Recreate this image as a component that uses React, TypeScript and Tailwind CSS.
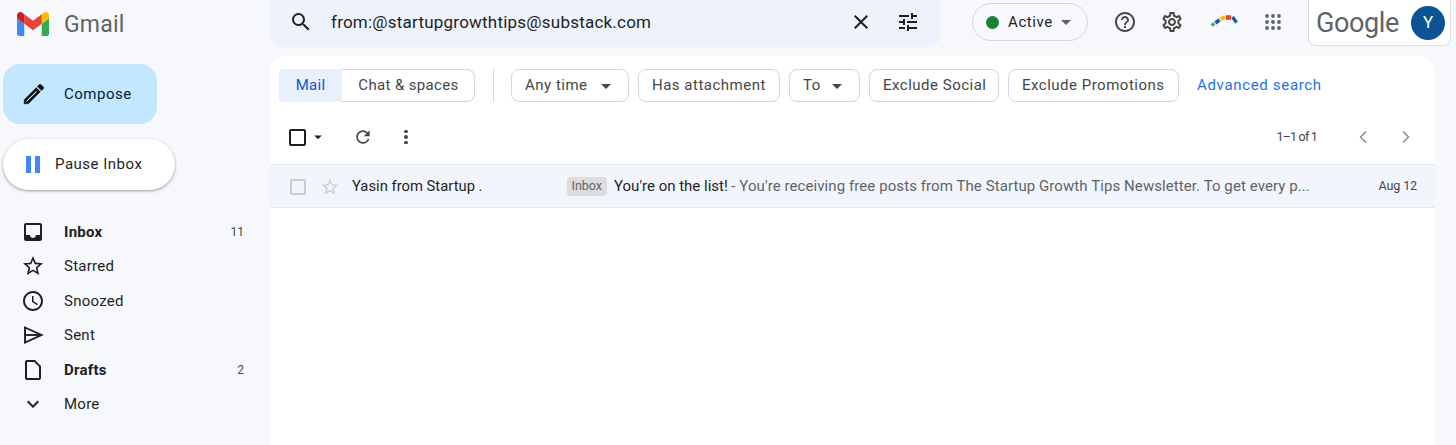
import React from "react";

const P = {
  search: "M15.5 14h-.79l-.28-.27A6.471 6.471 0 0 0 16 9.5 6.5 6.5 0 1 0 9.5 16c1.61 0 3.09-.59 4.23-1.57l.27.28v.79l5 4.99L20.49 19l-4.99-5zm-6 0C7.01 14 5 11.99 5 9.5S7.01 5 9.5 5 14 7.01 14 9.5 11.99 14 9.5 14z",
  close: "M19 6.41 17.59 5 12 10.59 6.41 5 5 6.41 10.59 12 5 17.59 6.41 19 12 13.41 17.59 19 19 17.59 13.41 12z",
  tune: "M3 17v2h6v-2H3zM3 5v2h10V5H3zm10 16v-2h8v-2h-8v-2h-2v6h2zM7 9v2H3v2h4v2h2V9H7zm14 4v-2H11v2h10zm-6-4h2V7h4V5h-4V3h-2v6z",
  help: "M11 18h2v-2h-2v2zm1-16C6.48 2 2 6.48 2 12s4.48 10 10 10 10-4.48 10-10S17.52 2 12 2zm0 18c-4.41 0-8-3.59-8-8s3.59-8 8-8 8 3.59 8 8-3.59 8-8 8zm0-14c-2.21 0-4 1.79-4 4h2c0-1.1.9-2 2-2s2 .9 2 2c0 2-3 1.75-3 5h2c0-2.25 3-2.5 3-5 0-2.21-1.79-4-4-4z",
  gear: "M19.43 12.98c.04-.32.07-.64.07-.98 0-.34-.03-.66-.07-.98l2.11-1.65c.19-.15.24-.42.12-.64l-2-3.46c-.09-.16-.26-.25-.44-.25-.06 0-.12.01-.17.03l-2.49 1c-.52-.4-1.08-.73-1.69-.98l-.38-2.65C14.46 2.18 14.25 2 14 2h-4c-.25 0-.46.18-.49.42l-.38 2.65c-.61.25-1.17.59-1.69.98l-2.49-1c-.06-.02-.12-.03-.18-.03-.17 0-.34.09-.43.25l-2 3.46c-.13.22-.07.49.12.64l2.11 1.65c-.04.32-.07.65-.07.98 0 .33.03.66.07.98l-2.11 1.65c-.19.15-.24.42-.12.64l2 3.46c.09.16.26.25.44.25.06 0 .12-.01.17-.03l2.49-1c.52.4 1.08.73 1.69.98l.38 2.65c.03.24.24.42.49.42h4c.25 0 .46-.18.49-.42l.38-2.65c.61-.25 1.17-.59 1.69-.98l2.49 1c.06.02.12.03.18.03.17 0 .34-.09.43-.25l2-3.46c.12-.22.07-.49-.12-.64l-2.11-1.65zm-1.98-1.71c.04.31.05.52.05.73 0 .21-.02.43-.05.73l-.14 1.13.89.7 1.08.84-.7 1.21-1.27-.51-1.04-.42-.9.68c-.43.32-.84.56-1.25.73l-1.06.43-.16 1.13-.2 1.35h-1.4l-.19-1.35-.16-1.13-1.06-.43c-.43-.18-.83-.41-1.23-.71l-.91-.7-1.06.43-1.27.51-.7-1.21 1.08-.84.89-.7-.14-1.13c-.03-.31-.05-.54-.05-.74s.02-.43.05-.73l.14-1.13-.89-.7-1.08-.84.7-1.21 1.27.51 1.04.42.9-.68c.43-.32.84-.56 1.25-.73l1.06-.43.16-1.13.2-1.35h1.39l.19 1.35.16 1.13 1.06.43c.43.18.83.41 1.23.71l.91.7 1.06-.43 1.27-.51.7 1.21-1.07.85-.89.7.14 1.13zM12 8c-2.21 0-4 1.79-4 4s1.79 4 4 4 4-1.79 4-4-1.79-4-4-4zm0 6c-1.1 0-2-.9-2-2s.9-2 2-2 2 .9 2 2-.9 2-2 2z",
  inbox: "M19 3H4.99c-1.11 0-1.98.89-1.98 2L3 19c0 1.1.88 2 1.99 2H19c1.1 0 2-.9 2-2V5c0-1.11-.9-2-2-2zm0 12h-4c0 1.66-1.35 3-3 3s-3-1.34-3-3H4.99V5H19v10z",
  star: "M22 9.24l-7.19-.62L12 2 9.19 8.63 2 9.24l5.46 4.73L5.82 21 12 17.27 18.18 21l-1.63-7.03L22 9.24zM12 15.4l-3.76 2.27 1-4.28-3.32-2.88 4.38-.38L12 6.1l1.71 4.04 4.38.38-3.32 2.88 1 4.28L12 15.4z",
  clock: "M11.99 2C6.47 2 2 6.48 2 12s4.47 10 9.99 10C17.52 22 22 17.52 22 12S17.52 2 11.99 2zM12 20c-4.42 0-8-3.58-8-8s3.58-8 8-8 8 3.58 8 8-3.58 8-8 8zm.5-13H11v6l5.25 3.15.75-1.23-4.5-2.67z",
  draft: "M14 2H6c-1.1 0-2 .9-2 2v16c0 1.1.9 2 2 2h12c1.1 0 2-.9 2-2V8l-6-6zm4 18H6V4h7.17L18 8.83V20z",
  down: "M16.59 8.59 12 13.17 7.41 8.59 6 10l6 6 6-6z",
  refresh: "M17.65 6.35A7.958 7.958 0 0 0 12 4c-4.42 0-7.99 3.58-7.99 8s3.57 8 7.99 8c3.73 0 6.84-2.55 7.73-6h-2.08A5.99 5.99 0 0 1 12 18c-3.31 0-6-2.69-6-6s2.69-6 6-6c1.66 0 3.14.69 4.22 1.78L13 11h7V4l-2.35 2.35z",
  edit: "M3 17.25V21h3.75L17.81 9.94l-3.75-3.75L3 17.25zM5.92 19H5v-.92l9.06-9.06.92.92L5.92 19zM20.71 5.63l-2.34-2.34c-.2-.2-.45-.29-.71-.29s-.51.1-.7.29l-1.83 1.83 3.75 3.75 1.83-1.83c.39-.39.39-1.02 0-1.41z",
  caret: "M7 10l5 5 5-5z",
};

function I({ d, size = 24, color = "#1f1f1f", sw = 0 }: { d: string; size?: number; color?: string; sw?: number }) {
  return (
    <svg width={size} height={size} viewBox="0 0 24 24" fill={color} stroke={sw ? color : "none"} strokeWidth={sw} className="shrink-0">
      <path d={d} />
    </svg>
  );
}

function SendIcon() {
  return (
    <svg width="24" height="24" viewBox="0 0 24 24" fill="none" stroke="#1f1f1f" strokeWidth="1.9" className="shrink-0">
      <path d="M4 4.5 20.5 12 4 19.5Z" />
      <path d="M4 12H20" />
    </svg>
  );
}

function GmailLogo() {
  return (
    <svg width="32" height="24" viewBox="52 42 88 66" className="shrink-0">
      <path fill="#4285f4" d="M58 108h14V74L52 59v43c0 3.32 2.69 6 6 6" />
      <path fill="#34a853" d="M120 108h14c3.32 0 6-2.69 6-6V59l-20 15" />
      <path fill="#fbbc04" d="M120 48v26l20-15v-8c0-7.42-8.47-11.65-14.4-7.2" />
      <path fill="#ea4335" d="M72 74V48l24 18 24-18v26L96 92" />
      <path fill="#c5221f" d="M52 51v8l20 15V48l-5.6-4.2c-5.94-4.45-14.4-.22-14.4 7.2" />
    </svg>
  );
}

function Rainbow() {
  const segs: [string, string, number][] = [
    ["#34a853", "M1.5 13.5 L4.5 11.5", 2.8],
    ["#1a56b0", "M5.5 11 L9.5 7.8", 3.6],
    ["#fbbc04", "M10.5 7.2 L15 5", 4],
    ["#ea4335", "M16 5.5 L21 5.5", 4.6],
    ["#0b5ca8", "M22.5 5 L26.5 10.5", 3.2],
  ];
  return (
    <svg width="28" height="16" viewBox="0 0 28 16" className="shrink-0">
      {segs.map(([c, d, w]) => (
        <path key={d} d={d} stroke={c} strokeWidth={w} fill="none" />
      ))}
    </svg>
  );
}

function Apps() {
  const xs = [3, 9, 15];
  return (
    <svg width="18" height="18" viewBox="0 0 18 18" fill="#5f6368" className="shrink-0">
      {xs.map((y) => xs.map((x) => <circle key={`${x}${y}`} cx={x} cy={y} r="1.9" />))}
    </svg>
  );
}

function Chip({ label, caret, cls }: { label: string; caret?: boolean; cls: string }) {
  return (
    <div className={`h-[33px] rounded-[8px] border border-[#d3d6da] flex items-center pl-[13px] text-[15px] text-[#444746] tracking-[0.5px] ${cls}`}>
      <span>{label}</span>
      {caret && <span className="ml-auto mr-[10px] flex"><I d={P.caret} size={24} color="#444746" /></span>}
    </div>
  );
}

function NavRow({ icon, label, bold, count }: { icon: React.ReactNode; label: string; bold?: boolean; count?: string }) {
  return (
    <div className="h-[34.5px] flex items-center pl-[21px] pr-[26px]">
      {icon}
      <span className={`ml-[19px] text-[15px] text-[#1f1f1f] tracking-[0.25px] ${bold ? "font-bold" : ""}`}>{label}</span>
      {count && <span className="ml-auto text-[12px] text-[#444746]">{count}</span>}
    </div>
  );
}

export default function App() {
  return (
    <div className="w-[1456px] h-[445px] overflow-hidden bg-[#f6f8fc] flex font-['Roboto',sans-serif]">
      <aside className="w-[270px] shrink-0 flex flex-col">
        <div className="h-[64px] flex items-start pl-[17px] pt-[12px]">
          <GmailLogo />
          <span className="ml-[15px] text-[23px] leading-[25px] text-[#5f6368] tracking-[0.2px]">Gmail</span>
        </div>
        <div className="ml-[3px] w-[154px] h-[60px] rounded-[17px] bg-[#c2e7ff] flex items-center pl-[18px]">
          <I d={P.edit} size={26} color="#0b0b0b" sw={0.5} />
          <span className="ml-[17px] pt-[1px] text-[15px] text-[#001d35] tracking-[0.5px]">Compose</span>
        </div>
        <div className="ml-[3px] mt-[15px] w-[172px] h-[51px] rounded-full bg-white shadow-[0_1px_3px_rgba(60,64,67,0.5)] flex items-center pl-[23px]">
          <span className="flex gap-[4px]">
            <span className="w-[5px] h-[17px] bg-[#4285f4]" />
            <span className="w-[5px] h-[17px] bg-[#4285f4]" />
          </span>
          <span className="ml-[15px] text-[15px] text-[#1f1f1f] tracking-[0.5px]">Pause Inbox</span>
        </div>
        <nav className="mt-[24.5px] flex flex-col">
          <NavRow icon={<I d={P.inbox} />} label="Inbox" bold count="11" />
          <NavRow icon={<I d={P.star} />} label="Starred" />
          <NavRow icon={<I d={P.clock} />} label="Snoozed" />
          <NavRow icon={<SendIcon />} label="Sent" />
          <NavRow icon={<I d={P.draft} />} label="Drafts" bold count="2" />
          <NavRow icon={<I d={P.down} />} label="More" />
        </nav>
      </aside>

      <div className="flex-1 min-w-0 flex flex-col">
        <header className="h-[56px] shrink-0 flex items-start">
          <div className="w-[670px] h-[47px] rounded-b-[12px] bg-[#edf2fc] flex items-center pl-[19px] pr-[20px] pb-[3px]">
            <I d={P.search} size={24} />
            <span className="ml-[18px] pt-[1px] text-[17px] text-[#1f1f1f] tracking-[0.22px]">from:@startupgrowthtips@substack.com</span>
            <span className="ml-auto flex"><I d={P.close} size={24} /></span>
            <span className="ml-[23px] flex"><I d={P.tune} size={24} /></span>
          </div>
          <div className="ml-[32px] mt-[3px] w-[116px] h-[38px] rounded-full border border-[#d3d6da] flex items-center pl-[13px]">
            <span className="w-[13px] h-[13px] rounded-full bg-[#188038]" />
            <span className="ml-[9px] text-[15px] text-[#1f1f1f] tracking-[0.6px]">Active</span>
            <span className="ml-[1px] flex"><I d={P.caret} size={24} color="#5f6368" /></span>
          </div>
          <span className="ml-[25px] mt-[10px] flex"><I d={P.help} size={24} color="#444746" /></span>
          <span className="ml-[23px] mt-[10px] flex"><I d={P.gear} size={24} color="#444746" /></span>
          <span className="ml-[26px] mt-[12px] flex"><Rainbow /></span>
          <span className="ml-[26px] mt-[13px] flex"><Apps /></span>
          <div className="ml-[26px] w-[143px] h-[46px] rounded-b-[8px] border border-t-0 border-[#dadce0] bg-white flex items-center pl-[7px]">
            <span className="text-[27px] text-[#5f6368] leading-[44px] tracking-[-0.4px]">Google</span>
            <span className="ml-auto mr-[5px] w-[34px] h-[34px] rounded-full bg-[#0b5394] text-white text-[17px] flex items-center justify-center">Y</span>
          </div>
        </header>

        <main className="w-[1165px] flex-1 bg-white rounded-t-[16px] flex flex-col">
          <div className="h-[46px] shrink-0 flex items-end pl-[9px]">
            <div className="w-[63px] h-[33px] rounded-l-[4px] bg-[#e8f0fe] text-[#0b57d0] text-[15px] tracking-[0.3px] flex items-center justify-center">Mail</div>
            <div className="w-[133px] h-[33px] rounded-r-[8px] border border-l-0 border-[#d3d6da] text-[#444746] text-[15px] tracking-[0.35px] flex items-center justify-center pl-[1px]">Chat &amp; spaces</div>
            <div className="ml-[18px] w-px h-[33px] bg-[#d3d6da]" />
            <div className="ml-[17px] flex gap-[9px]">
              <Chip label="Any time" caret cls="w-[118px]" />
              <Chip label="Has attachment" cls="w-[142px]" />
              <Chip label="To" caret cls="w-[71px]" />
              <Chip label="Exclude Social" cls="w-[130px]" />
              <Chip label="Exclude Promotions" cls="w-[171px]" />
            </div>
            <a className="ml-[18px] h-[33px] flex items-center text-[15px] text-[#1a73e8] tracking-[0.67px]">Advanced search</a>
          </div>

          <div className="h-[62px] shrink-0 flex items-center pl-[19px] pr-[17px] pt-[8px]">
            <span className="w-[17px] h-[17px] rounded-[2px] border-2 border-[#1f1f1f]" />
            <span className="ml-[3px] flex"><I d={P.caret} size={18} /></span>
            <span className="ml-[26px] flex"><I d={P.refresh} size={20} color="#444746" /></span>
            <span className="ml-[31px] flex flex-col gap-[2px]">
              <span className="w-[3.5px] h-[3.5px] rounded-full bg-[#444746]" />
              <span className="w-[3.5px] h-[3.5px] rounded-full bg-[#444746]" />
              <span className="w-[3.5px] h-[3.5px] rounded-full bg-[#444746]" />
            </span>
            <span className="ml-auto text-[12.5px] text-[#444746] tracking-[-0.8px]">1–1 of 1</span>
            <svg width="10" height="14" viewBox="0 0 10 14" fill="none" stroke="#80868b" strokeWidth="1.3" className="ml-[41px]"><path d="M8 1.5 2.5 7 8 12.5" /></svg>
            <svg width="10" height="14" viewBox="0 0 10 14" fill="none" stroke="#80868b" strokeWidth="1.3" className="ml-[33px] mr-[7px]"><path d="M2 1.5 7.5 7 2 12.5" /></svg>
          </div>

          <div className="h-[44px] shrink-0 bg-[#f2f6fc] border-y border-[#e3e8ef] flex items-center pl-[20px] pr-[18px] pt-[1px]">
            <span className="w-[16px] h-[16px] rounded-[2px] border-2 border-[#c9cbce]" />
            <span className="ml-[14px] flex"><I d={P.star} size={20} color="#c9cbce" /></span>
            <span className="ml-[12px] w-[215px] text-[14.8px] text-[#1f1f1f]">Yasin from Startup .</span>
            <span className="h-[19px] px-[4.5px] rounded-[4px] bg-[#dddddd] text-[12.5px] text-[#5f6368] flex items-center">Inbox</span>
            <span className="ml-[7.5px] text-[15px] text-[#1f1f1f]">You're on the list!</span>
            <span className="ml-[3.5px] text-[15px] text-[#5f6368] tracking-[0.08px]">- You're receiving free posts from The Startup Growth Tips Newsletter. To get every p...</span>
            <span className="ml-auto text-[12.5px] text-[#444746] tracking-[-0.1px]">Aug 12</span>
          </div>
        </main>
      </div>
    </div>
  );
}
